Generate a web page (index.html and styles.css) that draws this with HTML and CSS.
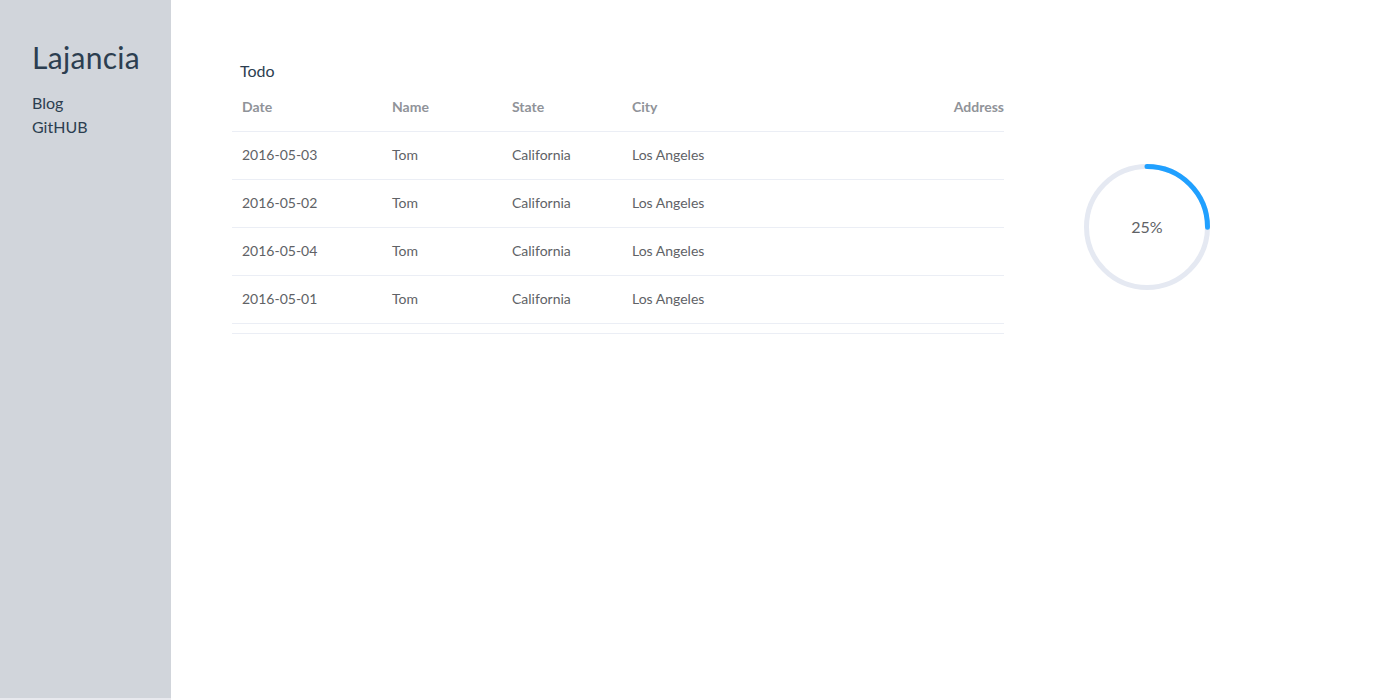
FILE: index.html
```html
<!DOCTYPE html>
<html>
<head>
<meta charset="utf-8">
<link rel="stylesheet" href="styles.css">
</head>
<body>
<div class="app">
  <aside class="sidebar">
    <div class="logo">Lajancia</div>
    <nav class="nav">
      <a class="nav-link">Blog</a>
      <a class="nav-link">GitHUB</a>
    </nav>
  </aside>
  <main class="main">
    <section class="todo">
      <div class="todo-title">Todo</div>
      <div class="table">
        <div class="row head">
          <div class="cell c-date">Date</div>
          <div class="cell c-name">Name</div>
          <div class="cell c-state">State</div>
          <div class="cell c-city">City</div>
          <div class="cell c-addr">Address</div>
        </div>
        <div class="row">
          <div class="cell c-date">2016-05-03</div>
          <div class="cell c-name">Tom</div>
          <div class="cell c-state">California</div>
          <div class="cell c-city">Los Angeles</div>
          <div class="cell c-addr"></div>
        </div>
        <div class="row">
          <div class="cell c-date">2016-05-02</div>
          <div class="cell c-name">Tom</div>
          <div class="cell c-state">California</div>
          <div class="cell c-city">Los Angeles</div>
          <div class="cell c-addr"></div>
        </div>
        <div class="row">
          <div class="cell c-date">2016-05-04</div>
          <div class="cell c-name">Tom</div>
          <div class="cell c-state">California</div>
          <div class="cell c-city">Los Angeles</div>
          <div class="cell c-addr"></div>
        </div>
        <div class="row">
          <div class="cell c-date">2016-05-01</div>
          <div class="cell c-name">Tom</div>
          <div class="cell c-state">California</div>
          <div class="cell c-city">Los Angeles</div>
          <div class="cell c-addr"></div>
        </div>
        <div class="table-foot"></div>
      </div>
    </section>
    <section class="progress">
      <div class="circle">
        <svg width="126" height="126" viewBox="0 0 126 126">
          <circle cx="63" cy="63" r="60.5" fill="none" stroke="#e5e9f2" stroke-width="5"/>
          <circle cx="63" cy="63" r="60.5" fill="none" stroke="#20a0ff" stroke-width="5" stroke-linecap="round" stroke-dasharray="95.03 380.13" transform="rotate(-90 63 63)"/>
        </svg>
        <div class="circle-text">25%</div>
      </div>
    </section>
  </main>
</div>
</body>
</html>
```
FILE: styles.css
```css
html, body {
  margin: 0;
  padding: 0;
  background: #ffffff;
}
body {
  font-family: Lato, "Noto Sans", "Liberation Sans", sans-serif;
  color: #2c3e50;
}
.app {
  display: flex;
  height: 700px;
}
.sidebar {
  width: 171px;
  background: #d1d5db;
  border-bottom: 2px solid #e8e9ee;
  box-sizing: border-box;
  padding: 38px 0 0 32px;
  flex-shrink: 0;
}
.logo {
  font-size: 30px;
  line-height: 38px;
  color: #2c3e50;
  letter-spacing: 0.3px;
}
.nav {
  display: flex;
  flex-direction: column;
  margin-top: 15px;
}
.nav-link {
  font-size: 16px;
  line-height: 24px;
  color: #2c3e50;
}
.main {
  flex: 1;
  display: flex;
  padding: 59px 0 0 61px;
  align-items: flex-start;
  background: #ffffff;
}
.todo {
  width: 772px;
}
.todo-title {
  font-size: 16px;
  line-height: 24px;
  height: 25px;
  padding-left: 8px;
  color: #2c3e50;
}
.table {
  font-size: 14px;
}
.row {
  display: flex;
  height: 48px;
  padding-bottom: 2px;
  align-items: center;
  border-bottom: 1px solid #ebeef5;
  box-sizing: border-box;
  color: #606266;
}
.row.head {
  color: #909399;
  font-weight: bold;
}
.cell {
  padding-left: 10px;
  box-sizing: border-box;
  white-space: nowrap;
}
.c-date { width: 150px; }
.c-name { width: 120px; }
.c-state { width: 120px; }
.c-city { width: 120px; }
.c-addr { flex: 1; text-align: right; padding-left: 0; }
.table-foot {
  height: 9px;
  border-bottom: 1px solid #ebeef5;
}
.progress {
  padding: 105px 0 0 80px;
}
.circle {
  position: relative;
  width: 126px;
  height: 126px;
}
.circle svg {
  display: block;
}
.circle-text {
  position: absolute;
  inset: 0;
  display: flex;
  align-items: center;
  justify-content: center;
  font-size: 16px;
  color: #606266;
  padding-bottom: 2px;
  box-sizing: border-box;
}
```
